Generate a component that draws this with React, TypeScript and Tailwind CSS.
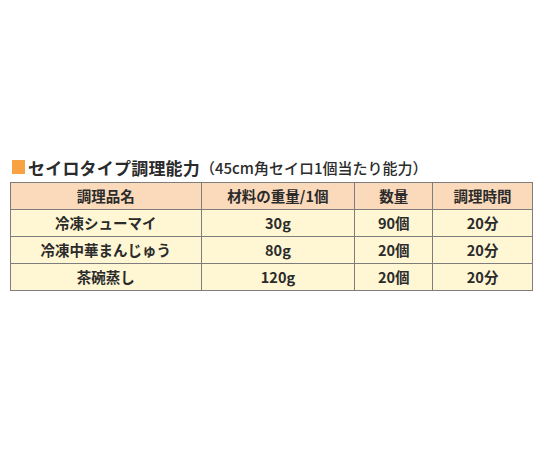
import React from 'react';

const rows = [
  ['冷凍シューマイ', '30g', '90個', '20分'],
  ['冷凍中華まんじゅう', '80g', '20個', '20分'],
  ['茶碗蒸し', '120g', '20個', '20分'],
];

export default function App() {
  return (
    <div
      className="w-[540px] h-[450px] bg-white pt-[156px] pl-[10px] text-[#2b2b2b]"
      style={{ fontFamily: '"Noto Sans CJK JP", "Noto Sans", sans-serif' }}
    >
      <div className="flex items-center h-[22px] pl-[2px]">
        <span className="w-[13px] h-[14px] bg-[#f8a243] mr-[3px]" />
        <span className="text-[17px] font-bold tracking-[0.2px] leading-none">セイロタイプ調理能力</span>
        <span className="text-[15px] font-medium leading-none">（45cm角セイロ1個当たり能力）</span>
      </div>
      <table className="mt-[4px] w-[523px] border-collapse border border-[#7d7d7d] text-[14.5px] font-bold text-center">
        <colgroup>
          <col className="w-[191px]" />
          <col className="w-[154px]" />
          <col className="w-[78px]" />
          <col className="w-[100px]" />
        </colgroup>
        <thead>
          <tr className="h-[27px] bg-[#fbdabc]">
            <th className="border border-[#7d7d7d] font-bold">調理品名</th>
            <th className="border border-[#7d7d7d] font-bold">材料の重量/1個</th>
            <th className="border border-[#7d7d7d] font-bold">数量</th>
            <th className="border border-[#7d7d7d] font-bold">調理時間</th>
          </tr>
        </thead>
        <tbody>
          {rows.map((r) => (
            <tr key={r[0]} className="h-[27px] bg-[#fff6d4]">
              {r.map((c, i) => (
                <td key={i} className="border border-[#7d7d7d]">{c}</td>
              ))}
            </tr>
          ))}
        </tbody>
      </table>
    </div>
  );
}
